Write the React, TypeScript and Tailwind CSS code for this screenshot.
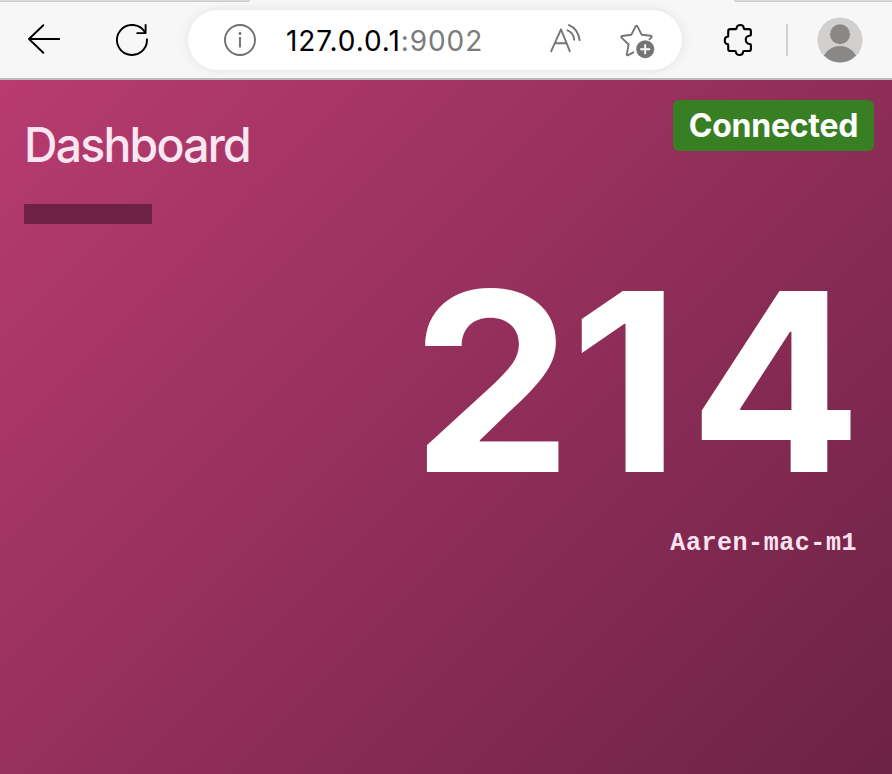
import React from "react";

function BackIcon() {
  return (
    <svg className="h-8 w-8" viewBox="0 0 32 32" fill="none" stroke="#000" strokeWidth="1.9" strokeLinecap="round" strokeLinejoin="round">
      <path d="M15.3 2.2 1 16l14.3 13.8M1 16h30.3" />
    </svg>
  );
}

function ReloadIcon() {
  return (
    <svg className="h-8 w-8" viewBox="0 0 32 32" fill="none" stroke="#000" strokeWidth="1.9" strokeLinejoin="round">
      <path d="M30.9 14.6A15 15 0 1 1 29.3 9.1M29.6.2v8.9h-9.1" />
    </svg>
  );
}

function InfoIcon() {
  return (
    <svg className="h-8 w-8" viewBox="0 0 32 32" fill="none" stroke="#6e6e6e" strokeWidth="1.9">
      <circle cx="16" cy="16" r="15" />
      <path d="M16 13v10.5" />
      <circle cx="16" cy="9.5" r="1.4" fill="#6e6e6e" stroke="none" />
    </svg>
  );
}

function ReadAloudIcon() {
  return (
    <svg className="h-[30px] w-8" viewBox="0 0 32 30" fill="none" stroke="#757575" strokeWidth="1.9" strokeLinecap="round" strokeLinejoin="round">
      <path d="M1.2 27.2 11 5.3l8.8 21.9M4.8 19.3h11.8" />
      <path d="M17.5 6.3c4.1 1.6 6.4 4.8 6.7 9.4M19 1.1c6.3 2.5 9.6 7.6 10.6 15.1" />
    </svg>
  );
}

function FavoriteIcon() {
  return (
    <svg className="h-9 w-9" viewBox="0 0 36 36" fill="none" stroke="#757575" strokeWidth="1.9" strokeLinecap="round" strokeLinejoin="round">
      <path d="m13.4 28.3-5.3 2.9c-.8.5-1.5 0-1.3-.9l1.8-9.8-7-6.9c-.6-.6-.4-1.4.5-1.6l9.3-1.3 4.3-8.6c.4-.7 1.2-.7 1.6 0l4.3 8.6 9.2 1.1c1 .1 1.2 1 .6 1.6l-1.9 2" />
      <circle cx="25.2" cy="25.2" r="9" fill="#757575" stroke="none" />
      <path d="M25.2 21v8.4M21 25.2h8.4" stroke="#fff" />
    </svg>
  );
}

function ExtensionsIcon() {
  return (
    <svg className="h-8 w-7 overflow-visible" viewBox="0 0 28 32" fill="none" stroke="#000" strokeWidth="2.1" strokeLinejoin="round">
      <path d="M4.2 7.2q0-2.1 2.1-2.1H12c.5 0 .6-.5.6-1 0-4.1 7.1-4.1 7.1 0 0 .5.1 1 .8 1h4.3q2.1 0 2.1 2.1v3.5c0 .7-.5 1-1.3 1-5.1 0-5.1 8.3 0 8.3.8 0 1.3.3 1.3 1v3.9q0 2.1-2.1 2.1h-4.8c-.7 0-1 .4-1 1 0 4-7.1 4-7.1 0 0-.6-.2-1-1-1H6.3q-2.1 0-2.1-2.1v-4c0-.6-.3-.8-.8-.8-3.5 0-3.5-7.3 0-7.3.5 0 .8-.3.8-.8Z" />
    </svg>
  );
}

function ProfileIcon() {
  return (
    <svg className="h-[46px] w-[46px]" viewBox="0 0 46 46">
      <defs>
        <clipPath id="avatar">
          <circle cx="23" cy="23" r="22.4" />
        </clipPath>
      </defs>
      <circle cx="23" cy="23" r="22.6" fill="#d2d0ce" />
      <g clipPath="url(#avatar)" fill="#8a8886">
        <circle cx="23" cy="17.2" r="10" />
        <circle cx="23" cy="47" r="18" />
      </g>
    </svg>
  );
}

function Toolbar() {
  return (
    <header className="flex h-20 flex-col border-b-2 border-[#bababa] bg-[#f7f7f7]">
      <div className="flex h-0.5 justify-between">
        <div className="w-[250px] rounded-br border-b border-[#c9c9c9] bg-[#dcdcdc]" />
        <div className="w-[158px] rounded-bl border-b border-[#c9c9c9] bg-[#dcdcdc]" />
      </div>
      <div className="flex h-[76px] items-center pl-7">
        <div className="-mt-0.5"><BackIcon /></div>
        <div className="ml-14"><ReloadIcon /></div>
        <div className="ml-10 flex h-[60px] w-[494px] items-center rounded-full bg-white pl-9 shadow-[0_0_12px_rgba(0,0,0,0.09)]">
          <InfoIcon />
          <div className="ml-[30px] mt-px w-[264px] whitespace-nowrap text-[28px] leading-none tracking-[0.92px] text-black">
            127.0.0.1<span className="text-[#7b7b7b]">:9002</span>
          </div>
          <div className="-mt-[3px]"><ReadAloudIcon /></div>
          <div className="ml-[37.5px] mt-1"><FavoriteIcon /></div>
        </div>
        <div className="ml-[42px]"><ExtensionsIcon /></div>
        <div className="ml-[34px] h-8 w-0.5 bg-[#d0d0d0]" />
        <div className="ml-[29px]"><ProfileIcon /></div>
      </div>
    </header>
  );
}

export default function App() {
  return (
    <div className="flex h-[774px] w-[892px] flex-col overflow-hidden font-['Inter',sans-serif]">
      <Toolbar />
      <main className="flex flex-1 flex-col bg-[linear-gradient(135deg,#b83b70_0%,#6c2245_100%)] text-white">
        <div className="flex h-[124px] items-start justify-between pl-6 pr-[18px] pt-5">
          <h1 className="mt-4 origin-left scale-x-[0.965] text-[48px] font-[450] leading-[58px] tracking-[-1.8px] text-[#f9e6f1]">Dashboard</h1>
          <div className="flex h-[51px] w-[201px] items-center justify-center rounded-md bg-[#387f23] text-[32px] font-bold leading-none tracking-[-0.25px]">
            Connected
          </div>
        </div>
        <div className="ml-6 h-5 w-32 bg-[#6d2245]" />
        <div className="mt-[33px] h-[250px] origin-right scale-x-[1.025] whitespace-nowrap pr-[26px] text-right text-[249px] font-bold leading-[250px] tracking-[3.4px]">
          <span className="tracking-[-2px]">2</span><span className="tracking-[8.8px]">1</span>4
        </div>
        <div className="mt-[21px] pr-[35px] text-right font-['Liberation_Mono',monospace] text-[25px] font-bold leading-8 tracking-[0.55px] text-[#fbe2f0]">
          Aaren-mac-m1
        </div>
      </main>
    </div>
  );
}
